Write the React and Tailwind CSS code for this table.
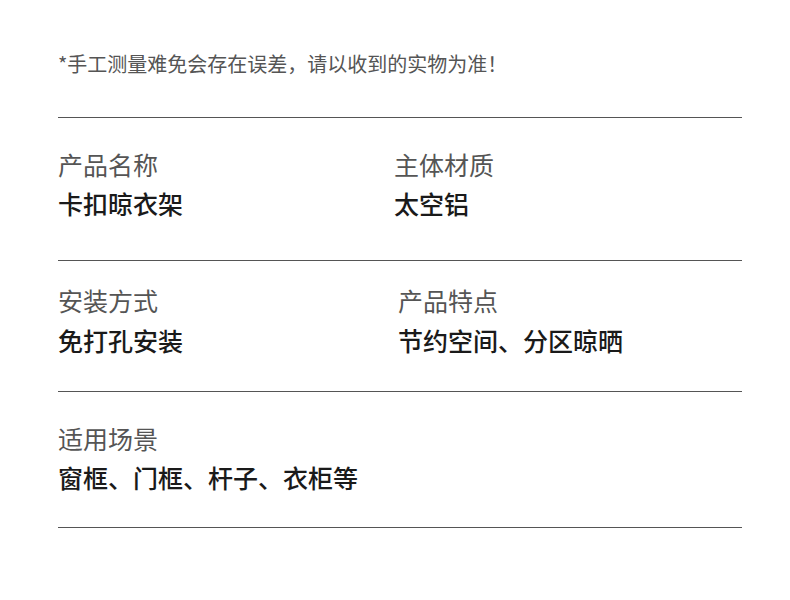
const rows = [
  {
    pad: "pt-[31px] pb-[42px]",
    gap: "mt-[9px]",
    left: { label: "产品名称", value: "卡扣晾衣架" },
    right: { label: "主体材质", value: "太空铝" },
    leftW: "w-[336px]",
  },
  {
    pad: "pt-[24px] pb-[36px]",
    gap: "mt-[10px]",
    left: { label: "安装方式", value: "免打孔安装" },
    right: { label: "产品特点", value: "节约空间、分区晾晒" },
    leftW: "w-[340px]",
  },
  {
    pad: "pt-[31px] pb-[35px]",
    gap: "mt-[9px]",
    left: { label: "适用场景", value: "窗框、门框、杆子、衣柜等" },
    right: null,
    leftW: "w-[340px]",
  },
];

function Cell({ item, gap, className = "" }) {
  return (
    <div className={className}>
      <div className="text-[25px] leading-[30px] text-[#555]">{item.label}</div>
      <div className={`text-[25px] leading-[30px] font-medium text-[#1a1a1a] ${gap}`}>{item.value}</div>
    </div>
  );
}

export default function App() {
  return (
    <div
      className="w-[790px] h-[600px] bg-white px-[58px] pt-[51px]"
      style={{ fontFamily: '"Noto Sans CJK SC", "Noto Sans", sans-serif' }}
    >
      <p className="text-[20px] leading-[26px] text-[#555] mb-[40px]">
        *手工测量难免会存在误差，请以收到的实物为准！
      </p>
      <div className="w-[684px] border-t border-[#555]">
        {rows.map((r) => (
          <div key={r.left.label} className={`flex border-b border-[#555] ${r.pad}`}>
            <Cell item={r.left} gap={r.gap} className={r.leftW} />
            {r.right && <Cell item={r.right} gap={r.gap} />}
          </div>
        ))}
      </div>
    </div>
  );
}
